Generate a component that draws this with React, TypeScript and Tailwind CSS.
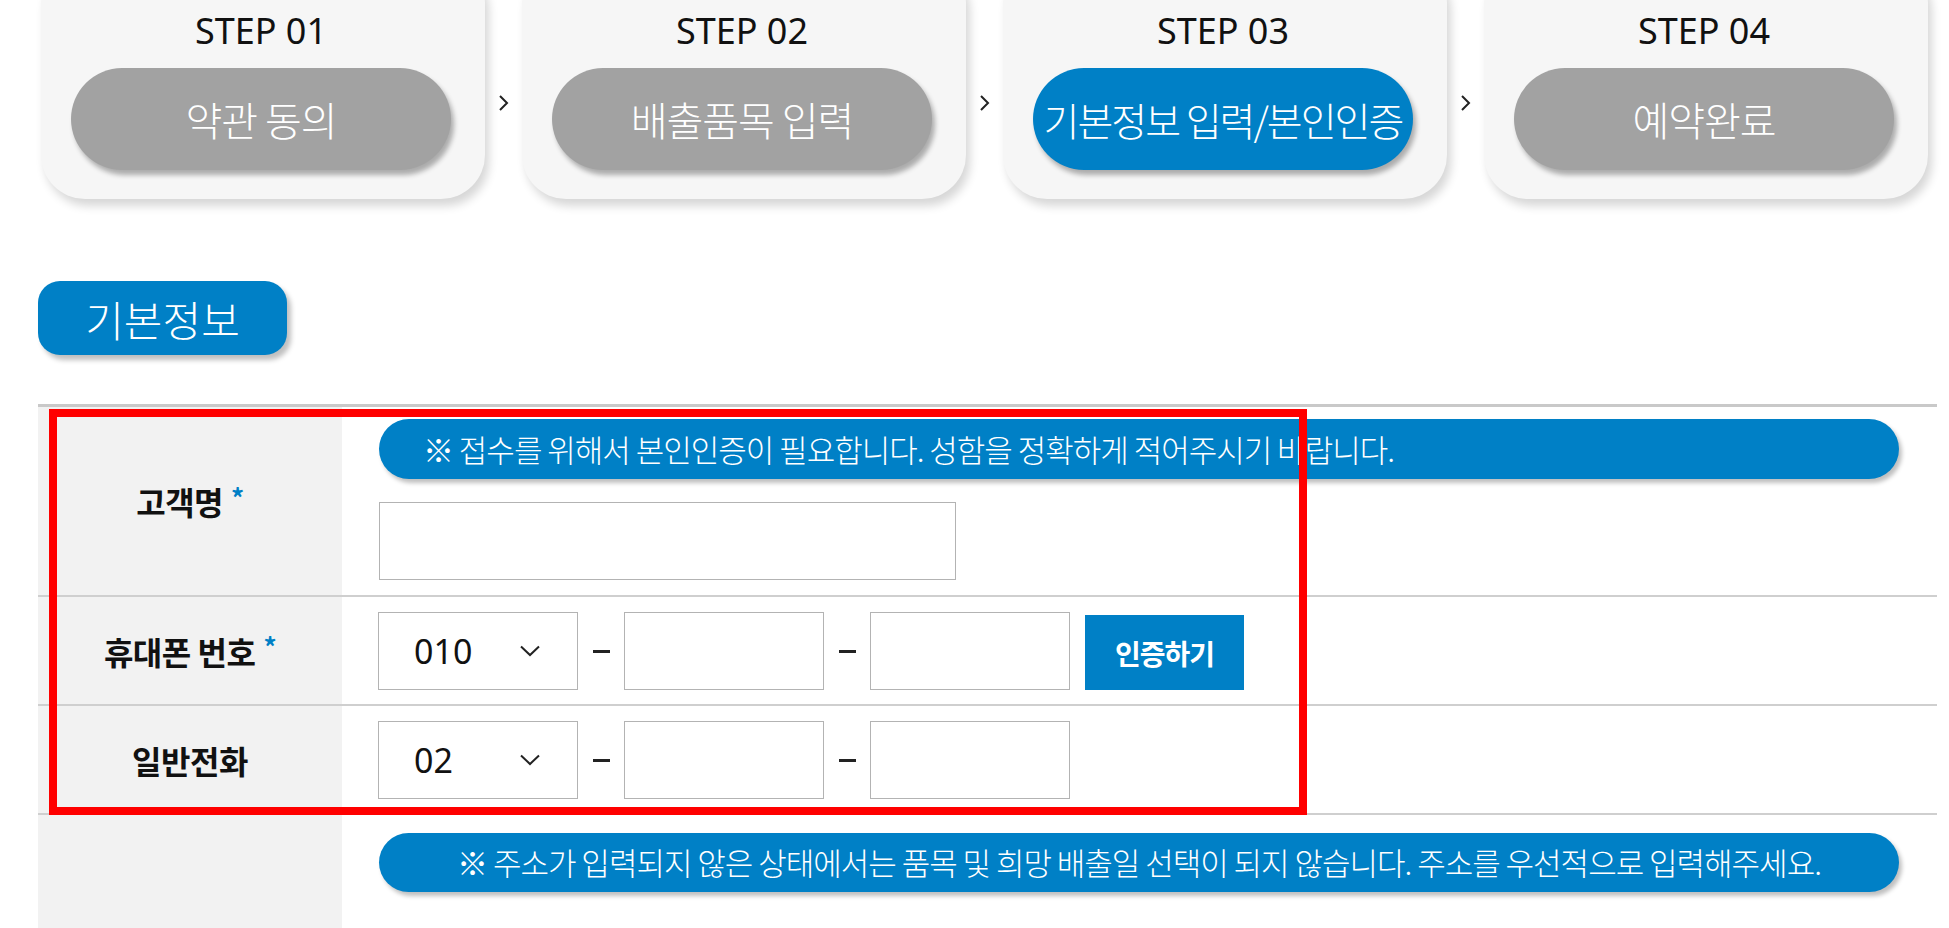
import React from 'react';

const steps = [
  { no: 'STEP 01', label: '약관 동의', active: false },
  { no: 'STEP 02', label: '배출품목 입력', active: false },
  { no: 'STEP 03', label: '기본정보 입력/본인인증', active: true },
  { no: 'STEP 04', label: '예약완료', active: false },
];

function Chevron() {
  return (
    <svg width="14" height="24" viewBox="0 0 14 24" className="shrink-0">
      <path d="M3 5 L10 12 L3 19" fill="none" stroke="#222" strokeWidth="2" />
    </svg>
  );
}

function StepCard({ no, label, active }: { no: string; label: string; active: boolean }) {
  return (
    <div className="w-[444px] shrink-0 -mt-[40px] pt-[51px] pb-[29px] pl-[30px] pr-[34px] flex flex-col items-center rounded-[44px] bg-[#f6f6f6] shadow-[4px_7px_10px_rgba(0,0,0,0.16)]">
      <div className="h-[40px] leading-[40px] text-[36px] text-[#111] font-['Noto_Sans','Noto_Sans_CJK_KR',sans-serif]">
        {no}
      </div>
      <div
        className={`mt-[17px] w-[380px] h-[102px] rounded-full flex items-center justify-center whitespace-nowrap text-white font-light shadow-[3px_5px_5px_rgba(0,0,0,0.3)] ${
          active ? 'bg-[#0080c6] text-[39px] tracking-[-2px]' : 'bg-[#a2a2a2] text-[40px] tracking-[-1px]'
        }`}
      >
        {label}
      </div>
    </div>
  );
}

function Dash() {
  return (
    <div className="w-[46px] shrink-0 flex justify-center">
      <div className="w-[17px] h-[3px] bg-[#222]" />
    </div>
  );
}

function FakeSelect({ value }: { value: string }) {
  return (
    <div className="w-[200px] h-[78px] shrink-0 border border-[#b3b3b3] bg-white flex items-center justify-between pl-[35px] pr-[36px]">
      <span className="text-[34px] text-[#111] font-['Noto_Sans',sans-serif]">{value}</span>
      <svg width="22" height="12" viewBox="0 0 22 12">
        <path d="M2 1.5 L11 10 L20 1.5" fill="none" stroke="#222" strokeWidth="2" />
      </svg>
    </div>
  );
}

function Field({ w = 'w-[200px]' }: { w?: string }) {
  return <input className={`${w} h-[78px] shrink-0 border border-[#b3b3b3] bg-white outline-none`} />;
}

function Label({ text, required }: { text: string; required?: boolean }) {
  return (
    <div className="bg-[#f2f2f2] flex items-center justify-center text-[32px] font-bold text-[#111] tracking-[-0.5px]">
      {text}
      {required && <span className="ml-[8px] text-[#0080c6] text-[26px] -mt-[10px]">*</span>}
    </div>
  );
}

export default function App() {
  return (
    <div className="relative w-full min-h-screen bg-white overflow-hidden font-['Noto_Sans_CJK_KR',sans-serif]">
      {/* steps */}
      <div className="flex items-start pl-[41px]">
        {steps.map((s, i) => (
          <React.Fragment key={s.no}>
            <StepCard {...s} />
            {i < steps.length - 1 && (
              <div className="w-[37px] shrink-0 h-[199px] flex items-center justify-center pt-[6px]">
                <Chevron />
              </div>
            )}
          </React.Fragment>
        ))}
      </div>

      {/* section title */}
      <div className="mt-[82px] ml-[38px] w-[249px] h-[74px] rounded-[22px] bg-[#0080c6] flex items-center justify-center text-white text-[42px] font-light shadow-[4px_5px_5px_rgba(0,0,0,0.25)]">
        기본정보
      </div>

      {/* form table */}
      <div className="mt-[49px] ml-[38px] mr-[12px] border-t-[3px] border-[#c9c9c9]">
        <div className="grid grid-cols-[304px_1fr] border-b-2 border-[#cfcfcf]">
          <Label text="고객명" required />
          <div className="pl-[37px] pr-[38px] pt-[12px] pb-[15px] flex flex-col">
            <div className="h-[60px] rounded-full bg-[#0080c6] flex items-center pl-[44px] text-white text-[31px] tracking-[-1px] font-light shadow-[3px_4px_4px_rgba(0,0,0,0.25)]">
              ※ 접수를 위해서 본인인증이 필요합니다. 성함을 정확하게 적어주시기 바랍니다.
            </div>
            <div className="mt-[23px]">
              <Field w="w-[577px]" />
            </div>
          </div>
        </div>

        <div className="grid grid-cols-[304px_1fr] border-b-2 border-[#cfcfcf]">
          <Label text="휴대폰 번호" required />
          <div className="pl-[36px] pt-[15px] pb-[14px] flex items-center">
            <FakeSelect value="010" />
            <Dash />
            <Field />
            <Dash />
            <Field />
            <button className="ml-[15px] w-[159px] h-[75px] self-end bg-[#0080c6] text-white text-[28px] font-bold tracking-[-1px]">
              인증하기
            </button>
          </div>
        </div>

        <div className="grid grid-cols-[304px_1fr] border-b-2 border-[#cfcfcf]">
          <Label text="일반전화" />
          <div className="pl-[36px] pt-[15px] pb-[14px] flex items-center">
            <FakeSelect value="02" />
            <Dash />
            <Field />
            <Dash />
            <Field />
          </div>
        </div>

        <div className="grid grid-cols-[304px_1fr]">
          <div className="bg-[#f2f2f2]" />
          <div className="pl-[37px] pr-[38px] pt-[18px] pb-[60px]">
            <div className="h-[59px] rounded-full bg-[#0080c6] flex items-center justify-center text-white text-[31px] tracking-[-1px] font-light shadow-[3px_4px_4px_rgba(0,0,0,0.25)]">
              ※ 주소가 입력되지 않은 상태에서는 품목 및 희망 배출일 선택이 되지 않습니다. 주소를 우선적으로 입력해주세요.
            </div>
          </div>
        </div>
      </div>

      {/* highlight box */}
      <div className="absolute left-[49px] top-[409px] w-[1258px] h-[406px] border-[8px] border-[#ff0000] pointer-events-none" />
    </div>
  );
}
